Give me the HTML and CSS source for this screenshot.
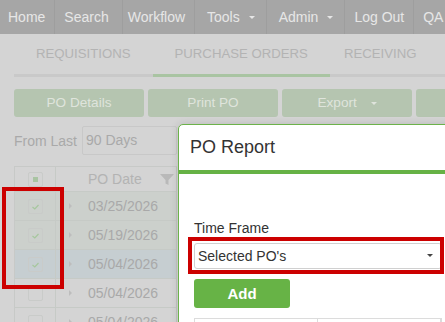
FILE: index.html
```html
<!DOCTYPE html>
<html lang="en">
<head>
    <meta charset="UTF-8">
    <title>Purchase Orders</title>
    <link rel="stylesheet" href="styles.css">
</head>
<body>
<nav class="topnav">
    <a class="nav-home">Home</a>
    <a class="nav-search">Search</a>
    <a class="nav-workflow">Workflow</a>
    <a class="dropdown">Tools <span class="caret"></span></a>
    <a class="dropdown">Admin <span class="caret"></span></a>
    <a>Log Out</a>
    <a>QA</a>
</nav>
<div class="page">
    <div class="tabs">
        <div class="tab">Requisitions</div>
        <div class="tab active">Purchase Orders</div>
        <div class="tab tab-last">Receiving</div>
    </div>
    <div class="toolbar">
        <div class="btn">PO Details</div>
        <div class="btn">Print PO</div>
        <div class="btn">Export <span class="caret"></span></div>
        <div class="btn"></div>
    </div>
    <div class="filter">
        <span>From Last</span>
        <div class="filter-input">90 Days</div>
    </div>
    <div class="grid">
        <div class="grid-row grid-head">
            <div class="cell-check"><span class="box"><span class="partial"></span></span></div>
            <div class="cell-date">PO Date
                <svg class="funnel" width="14" height="11" viewBox="0 0 14 11"><path d="M0 0 H14 L8.5 6 V11 L5.5 9.5 V6 Z" fill="#b9b9b9"/></svg>
            </div>
        </div>
        <div class="grid-row checked">
            <div class="cell-check"><span class="box"><svg width="13" height="13" viewBox="0 0 13 13"><path d="M3.5 7 L5.8 9 L9.5 5" fill="none" stroke="#a6c79d" stroke-width="1.2"/></svg></span></div>
            <div class="cell-date"><span class="arrow"></span>03/25/2026</div>
        </div>
        <div class="grid-row checked">
            <div class="cell-check"><span class="box"><svg width="13" height="13" viewBox="0 0 13 13"><path d="M3.5 7 L5.8 9 L9.5 5" fill="none" stroke="#a6c79d" stroke-width="1.2"/></svg></span></div>
            <div class="cell-date"><span class="arrow"></span>05/19/2026</div>
        </div>
        <div class="grid-row checked current">
            <div class="cell-check"><span class="box"><svg width="13" height="13" viewBox="0 0 13 13"><path d="M3.5 7 L5.8 9 L9.5 5" fill="none" stroke="#a6c79d" stroke-width="1.2"/></svg></span></div>
            <div class="cell-date"><span class="arrow"></span>05/04/2026</div>
        </div>
        <div class="grid-row">
            <div class="cell-check"><span class="box"></span></div>
            <div class="cell-date"><span class="arrow"></span>05/04/2026</div>
        </div>
        <div class="grid-row">
            <div class="cell-check"><span class="box"></span></div>
            <div class="cell-date"><span class="arrow"></span>05/04/2026</div>
        </div>
    </div>
</div>

<div class="modal">
    <div class="modal-header">PO Report</div>
    <div class="modal-body">
        <label class="field-label">Time Frame</label>
        <div class="select">Selected PO's <span class="select-caret"></span></div>
        <div class="btn-add">Add</div>
        <div class="modal-table">
            <div class="mt-cell"></div>
            <div class="mt-cell"></div>
        </div>
    </div>
</div>

<div class="mark mark-rows"></div>
<div class="mark mark-select"></div>
</body>
</html>
```

FILE: styles.css
```css
body { margin: 0; background: #d4d4d4; font-family: 'Liberation Sans', Arial, sans-serif; width: 445px; height: 322px; overflow: hidden; position: relative; }

.topnav { display: flex; height: 34px; background: #a6a6a6; white-space: nowrap; }
.topnav a { display: flex; align-items: center; padding: 0 9px; font-size: 14px; color: #e6e6e6; border-right: 1px solid #9e9e9e; }
.topnav .nav-home { padding-left: 8px; }
.topnav .nav-search { padding-right: 13px; }
.topnav .nav-workflow { padding-left: 5px; }
.topnav .dropdown { padding: 0 11px 0 12px; }
.caret { display: inline-block; width: 0; height: 0; margin-left: 9px; border-left: 3.5px solid transparent; border-right: 3.5px solid transparent; border-top: 3.5px solid currentColor; vertical-align: middle; }

.page { padding: 0 14px; }
.tabs { display: flex; border-bottom: 3px solid #c9c9c9; white-space: nowrap; width: 460px; }
.tab { padding: 0 22px; line-height: 40px; font-size: 13.2px; text-transform: uppercase; color: #b3b3b3; }
.tab.active { border-bottom: 3px solid #a9c4a2; margin-bottom: -3px; }
.tab-last { padding-left: 14px; }

.toolbar { display: flex; gap: 4px; margin-top: 12px; }
.btn { flex: none; width: 130px; height: 28px; line-height: 28px; text-align: center; background: #b5c5b0; border-radius: 3px; color: #dfe4dc; font-size: 13.6px; }
.btn .caret { margin-left: 10px; }

.filter { display: flex; align-items: center; margin-top: 9px; color: #a9a9a9; font-size: 14px; }
.filter-input { margin-left: 5px; width: 90px; height: 27px; line-height: 27px; padding-left: 3px; border: 1px solid #c8c8c8; border-radius: 2px; }

.grid { margin-top: 11px; width: 161px; border: 1px solid #c7c9c7; border-right-color: #c1c4c1; }
.grid-row { display: flex; height: 28px; border-top: 1px solid #c6cac6; }
.grid-head { height: 24px; border-top: none; }
.grid-row.checked { background: #ccd0cc; }
.grid-row.current { background: #c6ced1; }
.cell-check { width: 40px; border-right: 1px solid #c6cac6; display: flex; align-items: center; justify-content: center; }
.box { width: 13px; height: 13px; border: 1px solid #c9cbc9; border-radius: 2px; display: flex; align-items: center; justify-content: center; }
.partial { width: 5px; height: 5px; background: #a9c4a2; }
.cell-date { flex: 1; position: relative; display: flex; align-items: center; font-size: 14px; color: #a9a9a9; padding-left: 13px; }
.grid-head .cell-date { padding-left: 32px; color: #b3b3b3; }
.arrow { width: 0; height: 0; border-top: 3px solid transparent; border-bottom: 3px solid transparent; border-left: 3px solid #bdbdbd; margin-right: 16px; }
.funnel { position: absolute; right: 2px; top: 7px; }

.modal { position: absolute; left: 178px; top: 124px; width: 278px; height: 210px; background: #fff; border: 1px solid #6cb24b; border-radius: 5px 5px 0 0; box-shadow: 0 0 8px rgba(0,0,0,0.12); }
.modal-header { box-sizing: border-box; height: 49px; line-height: 44px; padding-left: 11px; font-size: 18px; color: #333; border-bottom: 4px solid #66b245; }
.modal-body { padding: 44px 15px 0; }
.field-label { display: block; font-size: 14px; line-height: 20px; color: #333; }
.select { position: relative; margin-top: 5px; height: 24px; line-height: 24px; padding-left: 3px; border: 1px solid #d0d0d0; border-radius: 3px; font-size: 14px; color: #333; }
.select-caret { position: absolute; right: 8px; top: 10px; width: 0; height: 0; border-left: 3px solid transparent; border-right: 3px solid transparent; border-top: 3px solid #444; }
.btn-add { margin-top: 10px; width: 96px; height: 29px; line-height: 29px; text-align: center; background: #67b346; color: #fff; font-weight: bold; font-size: 15px; border-radius: 3px; }
.modal-table { display: flex; margin-top: 10px; border: 1px solid #dcdcdc; height: 30px; }
.mt-cell { width: 162px; border-right: 1px solid #dcdcdc; }

.mark { position: absolute; border: 4px solid #cc0000; box-sizing: border-box; }
.mark-rows { left: 2px; top: 187px; width: 62px; height: 102px; }
.mark-select { left: 188px; top: 237px; width: 256px; height: 37px; }
```
